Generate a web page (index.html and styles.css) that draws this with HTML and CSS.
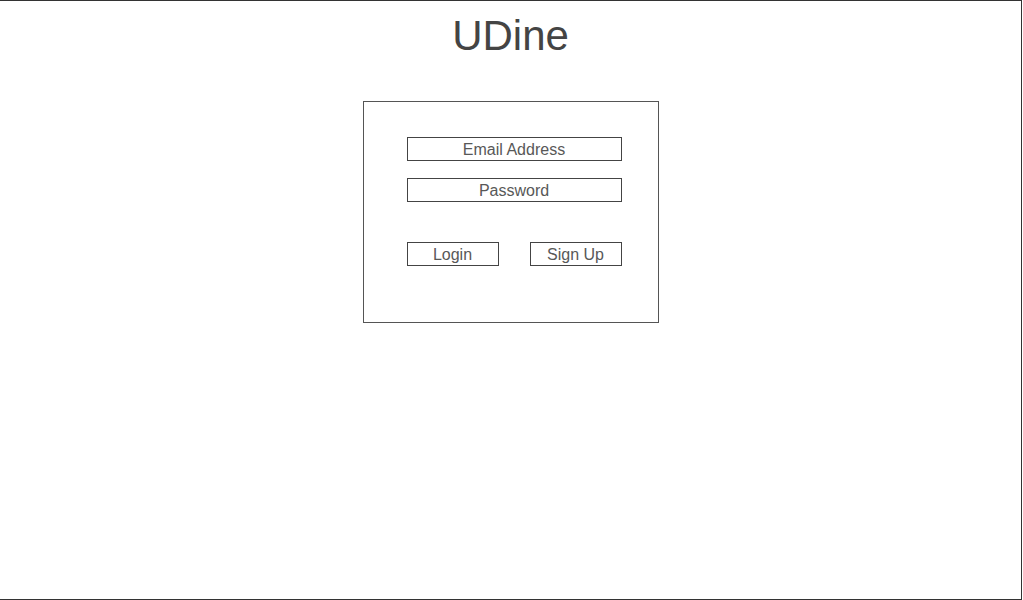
FILE: index.html
```html
<!DOCTYPE html>
<html>
<head>
<meta charset="utf-8">
<title>UDine</title>
<link rel="stylesheet" href="styles.css">
</head>
<body>
<div class="frame">
  <h1 class="title">UDine</h1>
  <div class="card">
    <div class="field">Email Address</div>
    <div class="field field-pw">Password</div>
    <div class="actions">
      <div class="btn">Login</div>
      <div class="btn">Sign Up</div>
    </div>
  </div>
</div>
</body>
</html>
```

FILE: styles.css
```css
html, body {
  margin: 0;
  padding: 0;
  background: #fff;
}
body {
  font-family: "Liberation Sans", Arial, sans-serif;
  color: #444;
}
.frame {
  box-sizing: border-box;
  width: 1022px;
  height: 600px;
  border-top: 1px solid #333;
  border-right: 1px solid #333;
  border-bottom: 1px solid #333;
  display: flex;
  flex-direction: column;
  align-items: center;
}
.title {
  margin: 0;
  padding-top: 11px;
  font-size: 42px;
  font-weight: normal;
  line-height: 48px;
  color: #444;
}
.card {
  box-sizing: border-box;
  width: 296px;
  height: 222px;
  margin-top: 41px;
  border: 1px solid #555;
  padding: 35px 36px 0 43px;
  display: flex;
  flex-direction: column;
}
.field {
  box-sizing: border-box;
  width: 215px;
  height: 24px;
  border: 1px solid #444;
  padding-top: 1px;
  text-align: center;
  font-size: 16px;
  line-height: 22px;
  color: #585858;
}
.field-pw {
  margin-top: 17px;
}
.actions {
  margin-top: 40px;
  width: 215px;
  display: flex;
  justify-content: space-between;
}
.btn {
  box-sizing: border-box;
  width: 92px;
  height: 24px;
  border: 1px solid #444;
  padding-top: 1px;
  text-align: center;
  font-size: 16px;
  line-height: 22px;
  color: #585858;
}
```
